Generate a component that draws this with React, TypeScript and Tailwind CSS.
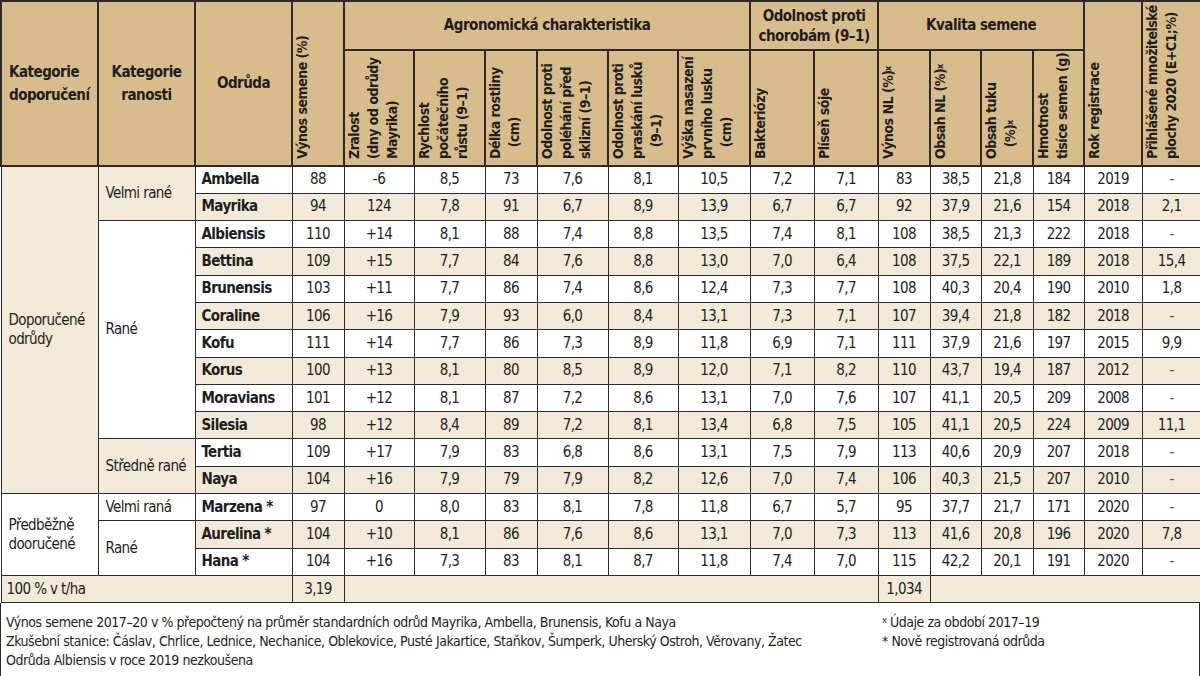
import React from 'react';

const rows: string[][] = [
  ['Ambella', '88', '-6', '8,5', '73', '7,6', '8,1', '10,5', '7,2', '7,1', '83', '38,5', '21,8', '184', '2019', '-'],
  ['Mayrika', '94', '124', '7,8', '91', '6,7', '8,9', '13,9', '6,7', '6,7', '92', '37,9', '21,6', '154', '2018', '2,1'],
  ['Albiensis', '110', '+14', '8,1', '88', '7,4', '8,8', '13,5', '7,4', '8,1', '108', '38,5', '21,3', '222', '2018', '-'],
  ['Bettina', '109', '+15', '7,7', '84', '7,6', '8,8', '13,0', '7,0', '6,4', '108', '37,5', '22,1', '189', '2018', '15,4'],
  ['Brunensis', '103', '+11', '7,7', '86', '7,4', '8,6', '12,4', '7,3', '7,7', '108', '40,3', '20,4', '190', '2010', '1,8'],
  ['Coraline', '106', '+16', '7,9', '93', '6,0', '8,4', '13,1', '7,3', '7,1', '107', '39,4', '21,8', '182', '2018', '-'],
  ['Kofu', '111', '+14', '7,7', '86', '7,3', '8,9', '11,8', '6,9', '7,1', '111', '37,9', '21,6', '197', '2015', '9,9'],
  ['Korus', '100', '+13', '8,1', '80', '8,5', '8,9', '12,0', '7,1', '8,2', '110', '43,7', '19,4', '187', '2012', '-'],
  ['Moravians', '101', '+12', '8,1', '87', '7,2', '8,6', '13,1', '7,0', '7,6', '107', '41,1', '20,5', '209', '2008', '-'],
  ['Silesia', '98', '+12', '8,4', '89', '7,2', '8,1', '13,4', '6,8', '7,5', '105', '41,1', '20,5', '224', '2009', '11,1'],
  ['Tertia', '109', '+17', '7,9', '83', '6,8', '8,6', '13,1', '7,5', '7,9', '113', '40,6', '20,9', '207', '2018', '-'],
  ['Naya', '104', '+16', '7,9', '79', '7,9', '8,2', '12,6', '7,0', '7,4', '106', '40,3', '21,5', '207', '2010', '-'],
  ['Marzena *', '97', '0', '8,0', '83', '8,1', '7,8', '11,8', '6,7', '5,7', '95', '37,7', '21,7', '171', '2020', '-'],
  ['Aurelina *', '104', '+10', '8,1', '86', '7,6', '8,6', '13,1', '7,0', '7,3', '113', '41,6', '20,8', '196', '2020', '7,8'],
  ['Hana *', '104', '+16', '7,3', '83', '8,1', '8,7', '11,8', '7,4', '7,0', '115', '42,2', '20,1', '191', '2020', '-'],
];

const widths = [
  'w-[97px]', 'w-[97px]', 'w-[97px]', 'w-[52px]', 'w-[70px]', 'w-[71px]', 'w-[52px]', 'w-[71px]', 'w-[70px]',
  'w-[72px]', 'w-[64px]', 'w-[64px]', 'w-[52px]', 'w-[51px]', 'w-[52px]', 'w-[51px]', 'w-[58px]', 'w-[59px]',
];

const th = 'border-2 border-[#2b2b2b] bg-[#d8bc8b] p-0 font-bold text-[#1e1e1e] whitespace-nowrap';
const td = 'border border-[#2b2b2b] p-0 whitespace-nowrap';

// rotated header text, reads bottom to top
function VHead({ tall, children }: { tall?: boolean; children: React.ReactNode }) {
  return (
    <div
      className={`mx-auto w-fit rotate-180 text-left text-[14px] leading-[19px] tracking-[-0.5px] [writing-mode:vertical-rl] ${
        tall ? 'h-[154px]' : 'h-[106px]'
      }`}>
      {children}
    </div>
  );
}

export default function App() {
  return (
    <div className="h-[676px] w-[1200px] overflow-hidden bg-white text-[#1e1e1e] [font-family:'DejaVu_Sans_Condensed','DejaVu_Sans',sans-serif] [font-stretch:condensed]">
      <table className="w-[1200px] table-fixed border-collapse">
        <colgroup>
          {widths.map((w, i) => (
            <col key={i} className={w} />
          ))}
        </colgroup>
        <thead className="text-[15px] tracking-[-0.5px]">
          <tr className="h-[49px]">
            <th rowSpan={2} className={`${th} pl-[7px] text-left leading-[23px]`}>
              Kategorie
              <br />
              doporučení
            </th>
            <th rowSpan={2} className={`${th} text-center leading-[23px]`}>
              Kategorie
              <br />
              ranosti
            </th>
            <th rowSpan={2} className={`${th} text-center`}>
              Odrůda
            </th>
            <th rowSpan={2} className={`${th} pb-[6px] align-bottom`}>
              <VHead tall>Výnos semene (%)</VHead>
            </th>
            <th colSpan={6} className={`${th} text-center`}>
              Agronomická charakteristika
            </th>
            <th colSpan={2} className={`${th} text-center leading-[20px]`}>
              Odolnost proti
              <br />
              chorobám (9–1)
            </th>
            <th colSpan={4} className={`${th} text-center`}>
              Kvalita semene
            </th>
            <th rowSpan={2} className={`${th} pb-[6px] align-bottom`}>
              <VHead tall>Rok registrace</VHead>
            </th>
            <th rowSpan={2} className={`${th} pb-[6px] align-bottom`}>
              <VHead tall>
                Přihlášené množitelské
                <br />
                plochy 2020 (E+C1;%)
              </VHead>
            </th>
          </tr>
          <tr className="h-[116px]">
            <th className={`${th} pb-[6px] align-bottom`}>
              <VHead>
                Zralost
                <br />
                (dny od odrůdy
                <br />
                Mayrika)
              </VHead>
            </th>
            <th className={`${th} pb-[6px] align-bottom`}>
              <VHead>
                Rychlost
                <br />
                počátečního
                <br />
                růstu (9–1)
              </VHead>
            </th>
            <th className={`${th} pb-[6px] align-bottom`}>
              <VHead>
                Délka rostliny
                <br />
                &nbsp;&nbsp;&nbsp;(cm)
              </VHead>
            </th>
            <th className={`${th} pb-[6px] align-bottom`}>
              <VHead>
                Odolnost proti
                <br />
                poléhání před
                <br />
                sklizní (9–1)
              </VHead>
            </th>
            <th className={`${th} pb-[6px] align-bottom`}>
              <VHead>
                Odolnost proti
                <br />
                praskání lusků
                <br />
                &nbsp;&nbsp;&nbsp;(9–1)
              </VHead>
            </th>
            <th className={`${th} pb-[6px] align-bottom`}>
              <VHead>
                Výška nasazení
                <br />
                prvního lusku
                <br />
                &nbsp;&nbsp;&nbsp;(cm)
              </VHead>
            </th>
            <th className={`${th} pb-[6px] align-bottom`}>
              <VHead>Bakteriózy</VHead>
            </th>
            <th className={`${th} pb-[6px] align-bottom`}>
              <VHead>Plíseň sóje</VHead>
            </th>
            <th className={`${th} pb-[6px] align-bottom`}>
              <VHead>
                Výnos NL (%)&nbsp;<sup className="text-[9px] tracking-normal">x</sup>
              </VHead>
            </th>
            <th className={`${th} pb-[6px] align-bottom`}>
              <VHead>
                Obsah NL (%)&nbsp;<sup className="text-[9px] tracking-normal">x</sup>
              </VHead>
            </th>
            <th className={`${th} pb-[6px] align-bottom`}>
              <VHead>
                Obsah tuku
                <br />
                &nbsp;&nbsp;&nbsp;(%)&nbsp;<sup className="text-[9px] tracking-normal">x</sup>
              </VHead>
            </th>
            <th className={`${th} pb-[6px] align-bottom`}>
              <VHead>
                Hmotnost
                <br />
                tisíce semen (g)
              </VHead>
            </th>
          </tr>
        </thead>
        <tbody className="text-[15px] leading-[19px] tracking-[-0.6px]">
          {rows.map((r, i) => {
            const shade = i % 2 === 1 ? 'bg-[#f2e9d8]' : 'bg-white';
            return (
              <tr key={r[0]} className={`h-[27.3px] ${shade}`}>
                {i === 0 && (
                  <td rowSpan={12} className={`${td} bg-[#f2e9d8] pl-[7px] text-left`}>
                    Doporučené
                    <br />
                    odrůdy
                  </td>
                )}
                {i === 12 && (
                  <td rowSpan={3} className={`${td} bg-white pl-[7px] text-left`}>
                    Předběžně
                    <br />
                    dooručené
                  </td>
                )}
                {i === 0 && (
                  <td rowSpan={2} className={`${td} bg-[#f2e9d8] pl-[7px] text-left`}>
                    Velmi rané
                  </td>
                )}
                {i === 2 && (
                  <td rowSpan={8} className={`${td} bg-white pl-[7px] text-left`}>
                    Rané
                  </td>
                )}
                {i === 10 && (
                  <td rowSpan={2} className={`${td} bg-[#f2e9d8] pl-[7px] text-left`}>
                    Středně rané
                  </td>
                )}
                {i === 12 && <td className={`${td} bg-white pl-[7px] text-left`}>Velmi raná</td>}
                {i === 13 && (
                  <td rowSpan={2} className={`${td} bg-white pl-[7px] text-left`}>
                    Rané
                  </td>
                )}
                <td className={`${td} pl-[6px] text-left font-bold`}>{r[0]}</td>
                {r.slice(1).map((v, j) => (
                  <td key={j} className={`${td} text-center ${v === '-' ? 'text-[#555]' : ''}`}>
                    {v}
                  </td>
                ))}
              </tr>
            );
          })}
          <tr className="h-[27.3px] bg-[#f2e9d8]">
            <td colSpan={3} className={`${td} pl-[5px] text-left`}>
              100 % v t/ha
            </td>
            <td className={`${td} text-center`}>3,19</td>
            <td colSpan={8} className={td}></td>
            <td className={`${td} text-center`}>1,034</td>
            <td colSpan={5} className={td}></td>
          </tr>
        </tbody>
      </table>
      <div className="flex h-[74px] border-x border-b border-[#2b2b2b] px-[5px] pt-[10px] text-[14px] leading-[18.7px] tracking-[-0.45px]">
        <div className="w-[876px]">
          <p>Výnos semene 2017–20 v % přepočtený na průměr standardních odrůd Mayrika, Ambella, Brunensis, Kofu a Naya</p>
          <p>Zkušební stanice: Čáslav, Chrlice, Lednice, Nechanice, Oblekovice, Pusté Jakartice, Staňkov, Šumperk, Uherský Ostroh, Věrovany, Žatec</p>
          <p>Odrůda Albiensis v roce 2019 nezkoušena</p>
        </div>
        <div>
          <p>
            <sup className="text-[9px]">x</sup> Údaje za období 2017–19
          </p>
          <p>* Nově registrovaná odrůda</p>
        </div>
      </div>
    </div>
  );
}
